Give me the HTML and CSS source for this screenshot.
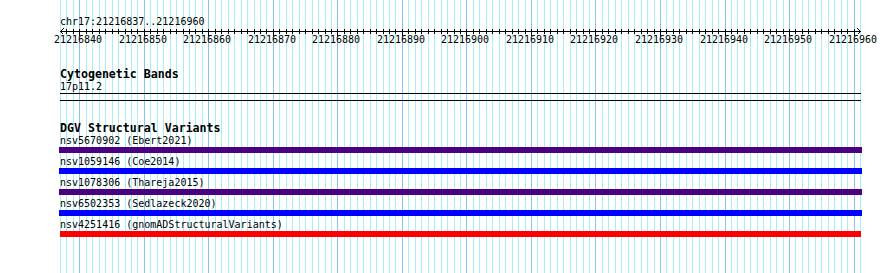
FILE: index.html
```html
<!DOCTYPE html>
<html lang="en">
<head>
    <meta charset="UTF-8">
    <meta name="viewport" content="width=device-width, initial-scale=1.0">
    <title>chr17:21216837-21216960</title>
    <link rel="stylesheet" href="styles.css">
</head>
<body>
    <div class="browser">
        <!-- one guide line per base, drawn by script.js -->
        <svg class="guides" id="guides" width="802" height="273"></svg>

        <div class="tracks">
            <div class="position">chr17:21216837..21216960</div>

            <!-- Base Position ruler -->
            <div class="ruler" id="ruler">
                <svg class="axis" id="axis" width="802" height="10"></svg>
            </div>

            <!-- Cytogenetic Bands -->
            <div class="track-title">Cytogenetic Bands</div>
            <div class="label">17p11.2</div>
            <div class="band"></div>

            <!-- DGV Structural Variants -->
            <div class="track-title dgv-title">DGV Structural Variants</div>
            <div class="items">
                <div class="item">
                    <div class="label">nsv5670902 (Ebert2021)</div>
                    <div class="bar bar-wide indigo"></div>
                </div>
                <div class="item">
                    <div class="label">nsv1059146 (Coe2014)</div>
                    <div class="bar bar-wide blue"></div>
                </div>
                <div class="item">
                    <div class="label">nsv1078306 (Thareja2015)</div>
                    <div class="bar bar-wide indigo"></div>
                </div>
                <div class="item">
                    <div class="label">nsv6502353 (Sedlazeck2020)</div>
                    <div class="bar bar-wide blue"></div>
                </div>
                <div class="item">
                    <div class="label">nsv4251416 (gnomADStructuralVariants)</div>
                    <div class="bar red"></div>
                </div>
            </div>
        </div>
    </div>

    <script src="script.js"></script>
</body>
</html>
```

FILE: styles.css
```css
/* General Styling */
body {
    margin: 0;
    background-color: #fff;
    color: #000;
    font-family: "DejaVu Sans Mono", "Liberation Mono", monospace;
    font-size: 10px;
}

.browser {
    position: relative;
    width: 890px;
    height: 273px;
    overflow: hidden;
}

/* Guide lines sit under everything else */
.guides {
    position: absolute;
    top: 0;
    left: 60px;
    shape-rendering: crispEdges;
}

.guide {
    stroke: #a9eef1;
    stroke-width: 1;
}

.guide.major {
    stroke: #86c6ee;
}

.tracks {
    position: relative;
    padding: 17px 0 0 60px;
}

.position,
.label {
    height: 10px;
    line-height: 10px;
    white-space: nowrap;
}

/* Ruler */
.ruler {
    position: relative;
    width: 800px;
    height: 18px;
}

.axis {
    display: block;
    overflow: visible;
    shape-rendering: crispEdges;
}

.axis line,
.axis polyline {
    stroke: #000;
    stroke-width: 1;
    fill: none;
}

.ruler-label {
    position: absolute;
    top: 8px;
    line-height: 10px;
    transform: translateX(-50%);
    white-space: nowrap;
}

/* Tracks */
.track-title {
    margin-top: 23px;
    height: 12px;
    line-height: 12px;
    font-size: 11.6px;
    font-weight: bold;
    white-space: nowrap;
}

.track-title + .label {
    margin-top: 2px;
}

.band {
    width: 801px;
    height: 6px;
    margin-top: 1px;
    border-top: 1px solid #000;
    border-bottom: 1px solid #000;
}

.dgv-title {
    margin-top: 21px;
}

.items {
    display: flex;
    flex-direction: column;
    gap: 4px;
    margin-top: 2px;
}

.bar {
    width: 801px;
    height: 6px;
    margin-top: 1px;
}

.bar-wide {
    width: 803px;
    margin-left: -1px;
}

.indigo {
    background-color: #4b0082;
}

.blue {
    background-color: #0000ff;
}

.red {
    background-color: #ff0000;
}
```

FILE: script.js
```js
// window shown in the image
const view = { chrom: 'chr17', start: 21216837, end: 21216960 };
const trackWidth = 800;
const bases = view.end - view.start + 1;
const perBase = trackWidth / bases;
const svgNS = 'http://www.w3.org/2000/svg';

function baseX(i) {
    return Math.round(i * perBase);
}

function addLine(svg, x1, y1, x2, y2, cls) {
    const l = document.createElementNS(svgNS, 'line');
    l.setAttribute('x1', x1);
    l.setAttribute('y1', y1);
    l.setAttribute('x2', x2);
    l.setAttribute('y2', y2);
    if (cls) l.setAttribute('class', cls);
    svg.appendChild(l);
}

function addArrow(svg, points) {
    const p = document.createElementNS(svgNS, 'polyline');
    p.setAttribute('points', points);
    svg.appendChild(p);
}

// guide lines
const guides = document.getElementById('guides');
for (let i = 0; i <= bases; i++) {
    const x = baseX(i) + 0.5;
    const pos = view.start + i;
    addLine(guides, x, 0, x, 273, pos % 10 === 0 ? 'guide major' : 'guide');
}

// ruler: axis, a tick per base, a label every 10
const axis = document.getElementById('axis');
const ruler = document.getElementById('ruler');
addLine(axis, 0, 4.5, trackWidth + 1, 4.5);
addArrow(axis, '3.5,1.5 0.5,4.5 3.5,7.5');
addArrow(axis, (trackWidth - 2.5) + ',1.5 ' + (trackWidth + 0.5) + ',4.5 ' + (trackWidth - 2.5) + ',7.5');

for (let i = 1; i < bases; i++) {
    const x = baseX(i) + 0.5;
    const pos = view.start + i;
    if (pos % 10 === 0) {
        addLine(axis, x, 2, x, 9);
        const label = document.createElement('span');
        label.className = 'ruler-label';
        label.textContent = pos;
        label.style.left = (baseX(i) - 1) + 'px';
        ruler.appendChild(label);
    } else {
        addLine(axis, x, 2, x, 7);
    }
}
```
